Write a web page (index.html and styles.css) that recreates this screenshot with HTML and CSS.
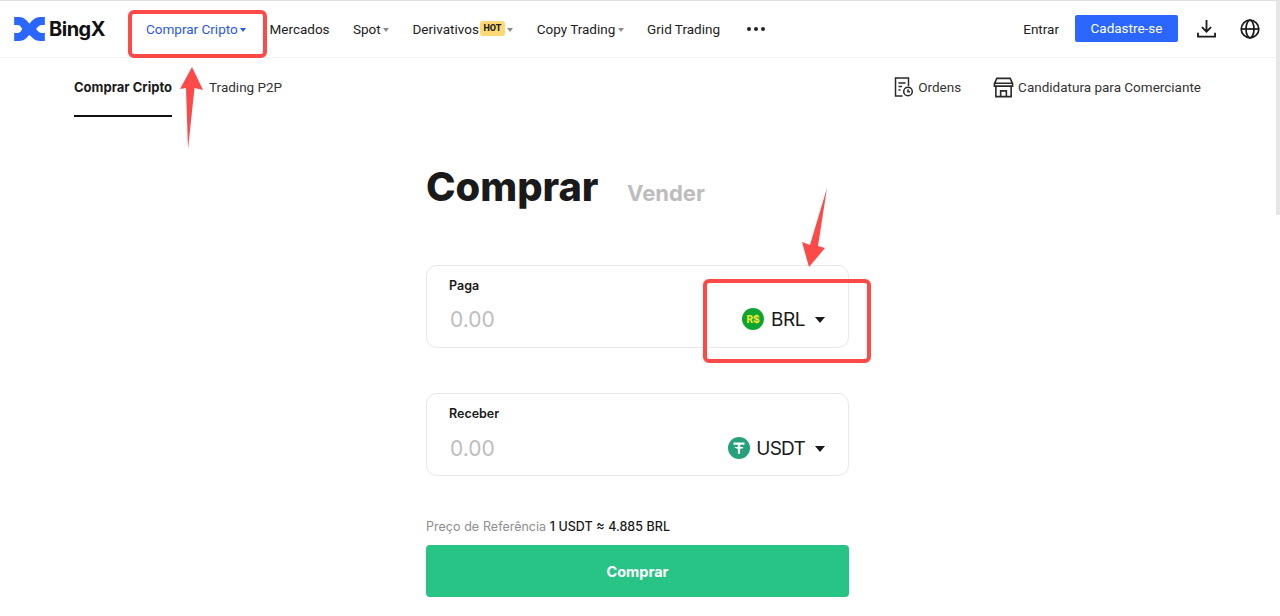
FILE: index.html
```html
<!DOCTYPE html>
<html lang="pt">
<head>
<meta charset="utf-8">
<title>BingX - Comprar Cripto</title>
<link rel="stylesheet" href="styles.css">
</head>
<body>
<div class="page">
  <header class="topbar">
    <a class="logo">
      <svg class="logo-mark" viewBox="0 0 30.700 24" width="31" height="24"><path fill="#2a66ff" d="M0 0H5C10 0 12 3 15.300 6.700 18.600 3 21 0 26 0H30.700V8H28C25 8 23.500 10 22 12 23.500 14 25 16 28 16H30.700V24H26C21 24 18.600 21 15.300 18 12 21 10 24 5 24H0V16H3C6 16 7 14 8 12 7 10 6 8 3 8H0Z"/></svg>
      <span class="logo-text">BingX</span>
    </a>
    <nav class="nav">
      <a class="nav-item active">Comprar Cripto<i class="caret"></i></a>
      <a class="nav-item">Mercados</a>
      <a class="nav-item">Spot<i class="caret"></i></a>
      <a class="nav-item">Derivativos<span class="hot">HOT</span><i class="caret"></i></a>
      <a class="nav-item">Copy Trading<i class="caret"></i></a>
      <a class="nav-item">Grid Trading</a>
      <a class="dots"><i></i><i></i><i></i></a>
    </nav>
    <div class="actions">
      <a class="login">Entrar</a>
      <a class="signup">Cadastre-se</a>
      <svg class="icon-dl" viewBox="0 0 20 20" width="19" height="19" fill="none" stroke="#1a1a1a" stroke-width="1.900"><path d="M10 1v12M5.200 8.500l4.800 4.800 4.800-4.800M1 14.500v4h18v-4"/></svg>
      <svg class="icon-globe" viewBox="0 0 20 20" width="20" height="20" fill="none" stroke="#1a1a1a" stroke-width="1.700"><circle cx="10" cy="10" r="8.800"/><ellipse cx="10" cy="10" rx="4" ry="8.800"/><path d="M1.200 10h17.600"/></svg>
    </div>
  </header>

  <div class="subnav">
    <div class="tabs">
      <a class="tab current">Comprar Cripto</a>
      <a class="tab">Trading P2P</a>
    </div>
    <div class="links">
      <a class="link">
        <svg viewBox="0 0 20 20" width="20" height="20" fill="none" stroke="#2a2a2a" stroke-width="1.500"><path d="M8.500 19H1.500V1h13v8M4.500 6h7M4.500 9.500h3.500M4.500 13h2"/><circle cx="14" cy="14.500" r="4.300"/><path d="M14 12.300v2.400h2"/></svg>
        Ordens
      </a>
      <a class="link">
        <svg viewBox="0 0 22 22" width="21" height="21" fill="none" stroke="#2a2a2a" stroke-width="1.700"><path d="M4 1.500h14l2.500 5.500v2.500h-19V7zM1.500 6.500h19M3 9.500v11h16v-11M8 20.500v-6h6v6"/></svg>
        Candidatura para Comerciante
      </a>
    </div>
  </div>

  <main class="trade">
    <div class="trade-head">
      <h1>Comprar</h1>
      <span class="sell">Vender</span>
    </div>

    <section class="field pay">
      <label>Paga</label>
      <div class="field-row">
        <span class="amount">0.00</span>
        <span class="coin">
          <span class="coin-icon brl">R$</span>
          <span class="coin-name">BRL</span>
          <i class="coin-caret"></i>
        </span>
      </div>
    </section>

    <section class="field receive">
      <label>Receber</label>
      <div class="field-row">
        <span class="amount">0.00</span>
        <span class="coin">
          <svg class="coin-icon" viewBox="0 0 22 22" width="22" height="22"><circle cx="11" cy="11" r="11" fill="#26a17b"/><path fill="#fff" d="M5.500 5.500h11v2.200h-4.400v2.100c1.900.1 3.400.5 3.400 1s-1.500.9-3.400 1v5h-2.200v-5c-1.900-.1-3.400-.5-3.400-1s1.500-.9 3.400-1V7.700H5.500z"/></svg>
          <span class="coin-name">USDT</span>
          <i class="coin-caret"></i>
        </span>
      </div>
    </section>

    <p class="rate"><span>Preço de Referência</span> 1 USDT ≈ 4.885 BRL</p>
    <button class="buy">Comprar</button>
  </main>

  <div class="scrollbar"></div>

  <div class="mark box-nav"></div>
  <div class="mark box-coin"></div>
  <svg class="arrow arrow-nav" viewBox="0 0 24 86" width="24" height="86"><path fill="#fb4a47" d="M12 3 23 26 14.500 24 8 85 6 24 0 25Z"/></svg>
  <svg class="arrow arrow-coin" viewBox="0 0 30 84" width="30" height="84"><path fill="#fb4a47" d="M27 2 18 60 25 62 9 81 2 56 10 59Z"/></svg>
</div>
</body>
</html>
```

FILE: styles.css
```css
* { box-sizing: border-box; }
html, body { margin: 0; padding: 0; height: 100%; overflow: hidden; }
body { font-family: Inter, "Noto Sans", "Liberation Sans", sans-serif; color: #1a1a1a; background: #fff; }
a { color: inherit; text-decoration: none; }
.page { position: relative; height: 616px; border-top: 1px solid #e0e0e0; overflow: hidden; }

.topbar { display: flex; align-items: center; height: 57px; padding: 0 20px 1px 14px; border-bottom: 1px solid #f2f2f2; font-family: Roboto, Inter, sans-serif; font-size: 13.500px; }
.logo { display: flex; align-items: center; gap: 4px; width: 132px; }
.logo-text { font-family: Inter, sans-serif; font-size: 20px; font-weight: 700; letter-spacing: -0.500px; color: #111; }
.nav { display: flex; align-items: center; gap: 23.300px; }
.nav-item { display: flex; align-items: center; white-space: nowrap; color: #222; }
.nav-item.active { color: #2a57f0; }
.caret { width: 0; height: 0; margin-left: 2.500px; margin-top: 2px; border: 3.500px solid transparent; border-top: 4px solid #8c8c8c; border-bottom: 0; }
.active .caret { border-top-color: #2a57f0; }
.hot { width: 25px; margin-left: 1px; height: 15px; line-height: 15px; text-align: center; border-radius: 3px; background: #ffd873; font-size: 9px; font-weight: 800; color: #222; }
.dots { display: flex; gap: 3px; margin-left: 3.500px; }
.dots i { width: 4px; height: 4px; border-radius: 50%; background: #222; }
.actions { display: flex; align-items: center; margin-left: auto; }
.login { color: #222; margin-right: 16px; }
.signup { display: block; width: 103px; height: 27px; line-height: 27px; text-align: center; border-radius: 2px; background: #2a66ff; color: #fff; margin-right: 19px; }
.icon-dl { margin-right: 24px; }

.subnav { display: flex; justify-content: space-between; height: 59px; padding: 0 79px 0 74px; font-family: Roboto, Inter, sans-serif; font-size: 13.500px; }
.tabs { display: flex; gap: 37px; }
.tab { display: block; height: 59px; padding-top: 21px; color: #333; }
.tab.current { font-family: Inter, sans-serif; font-size: 13px; font-weight: 700; color: #1a1a1a; border-bottom: 2px solid #111; }
.links { display: flex; gap: 32px; padding-top: 19px; }
.link { display: flex; align-items: flex-start; gap: 4px; line-height: 20px; height: 24px; color: #333; }

.trade { width: 423px; margin-left: 426px; }
.trade-head { display: flex; align-items: baseline; gap: 28.500px; margin-top: 43px; height: 53px; }
h1 { margin: 0; font-size: 39.800px; line-height: 53px; font-weight: 800; color: #1a1a1a; }
.sell { font-size: 22px; font-weight: 700; color: #bdbdbd; }

.field { height: 83px; border: 1px solid #e8e8e8; border-radius: 11px; padding: 11px 23px 0 22px; }
.pay { margin-top: 52px; }
.receive { margin-top: 45px; }
.receive .field-row { margin-top: 9px; }
.field label { display: block; font-size: 12.500px; line-height: 18px; font-weight: 600; color: #1a1a1a; }
.field-row { display: flex; justify-content: space-between; align-items: center; margin-top: 8px; height: 32px; }
.amount { font-size: 21px; color: #bdbdbd; margin-left: 1px; }
.coin { display: flex; align-items: center; }
.coin-icon { flex: none; width: 22px; height: 22px; }
.coin-icon.brl { border-radius: 50%; background: #0da52f; color: #e8e337; font-size: 10px; font-weight: 800; line-height: 22px; text-align: center; }
.coin-name { margin-left: 7px; font-size: 19px; letter-spacing: -0.500px; color: #1a1a1a; }
.receive .coin-name { margin-left: 6px; letter-spacing: -0.750px; }
.coin-caret { width: 0; height: 0; margin-left: 10px; margin-top: 2px; border: 5px solid transparent; border-top: 6px solid #1a1a1a; border-bottom: 0; }

.rate { margin: 42px 0 0; height: 18px; line-height: 18px; font-size: 12.500px; font-weight: 500; color: #1a1a1a; word-spacing: 0.300px; }
.rate span { color: #8e8e8e; font-weight: 400; }
.buy { display: block; width: 100%; height: 52px; margin-top: 9px; border: 0; border-radius: 4px; background: #27c485; color: #fff; font: 700 14.500px Inter, "Noto Sans", sans-serif; }

.scrollbar { position: absolute; right: 0; top: 0; width: 4px; height: 214px; background: #e6e6e6; }
.mark { position: absolute; border: 4px solid #fb4a47; border-radius: 6px; }
.box-nav { left: 128px; top: 9px; width: 139px; height: 48px; }
.box-coin { left: 703px; top: 278px; width: 168px; height: 84px; }
.arrow { position: absolute; }
.arrow-nav { left: 180px; top: 63px; }
.arrow-coin { left: 800px; top: 185px; }
```
